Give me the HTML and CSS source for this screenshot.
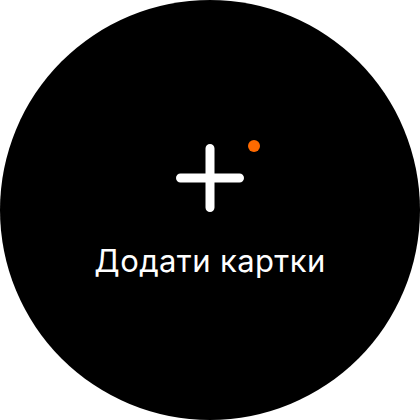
FILE: index.html
```html
<!DOCTYPE html>
<html lang="uk">
<head>
<meta charset="utf-8">
<link rel="stylesheet" href="styles.css">
</head>
<body>
<div class="watch">
  <div class="icon">
    <svg class="plus" width="68" height="68" viewBox="0 0 68 68">
      <path d="M34 4.5 V63.5 M4.5 34 H63.5" stroke="#ffffff" stroke-width="9" stroke-linecap="round" fill="none"/>
    </svg>
    <span class="dot"></span>
  </div>
  <div class="label">Додати картки</div>
</div>
</body>
</html>
```
FILE: styles.css
```css
html, body {
  margin: 0;
  padding: 0;
  background: #ffffff;
}
.watch {
  width: 420px;
  height: 420px;
  border-radius: 50%;
  background: #000000;
  display: flex;
  flex-direction: column;
  align-items: center;
  padding-top: 144px;
  box-sizing: border-box;
}
.icon {
  position: relative;
  width: 68px;
  height: 68px;
}
.plus {
  display: block;
}
.dot {
  position: absolute;
  left: 72px;
  top: -4px;
  width: 12px;
  height: 12px;
  border-radius: 50%;
  background: #ff6a00;
}
.label {
  margin-top: 31px;
  font-family: "Inter", "Noto Sans", sans-serif;
  font-size: 31px;
  line-height: 36px;
  color: #ffffff;
  letter-spacing: 0.4px;
}
```
